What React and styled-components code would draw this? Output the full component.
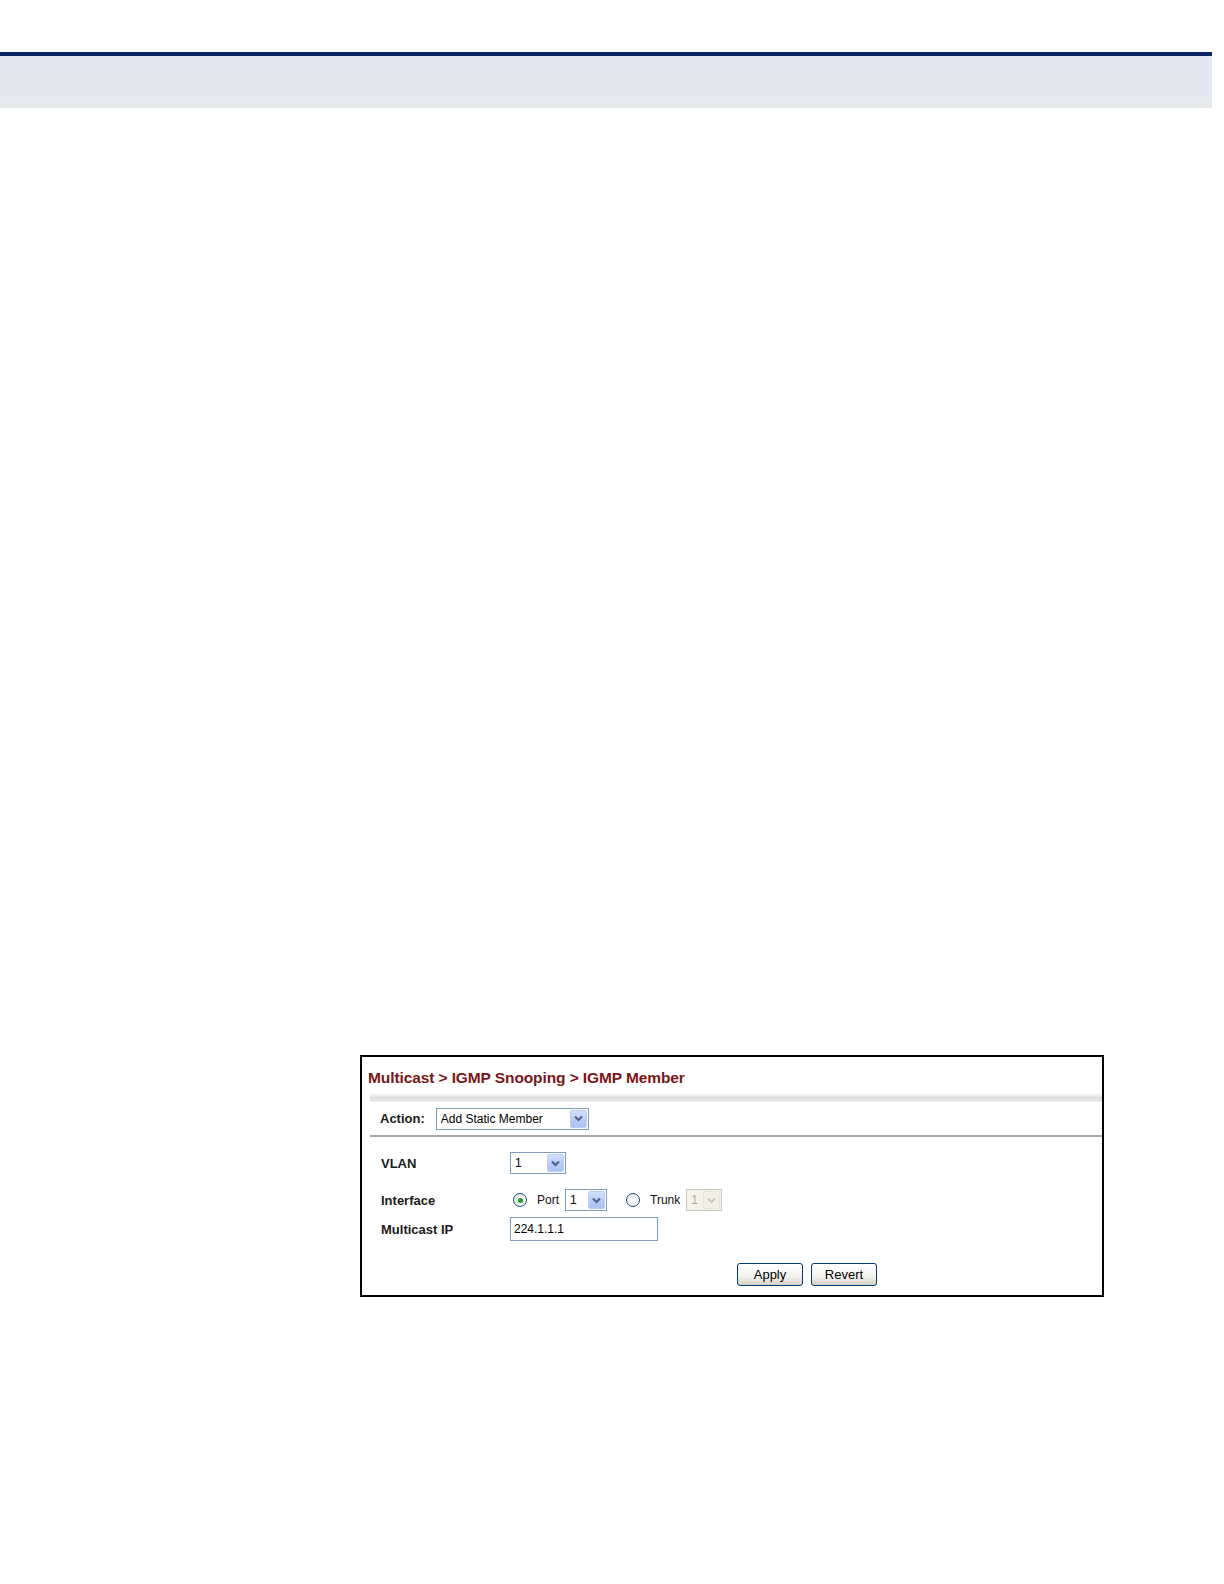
import React from "react";
import styled, { createGlobalStyle } from "styled-components";

const Global = createGlobalStyle`
  html, body {
    margin: 0;
    padding: 0;
    background: #ffffff;
  }
  body {
    font-family: "Liberation Sans", Arial, sans-serif;
  }
`;

const Page = styled.div`
  width: 1224px;
  height: 1584px;
  overflow: hidden;
  padding-top: 52px;
  box-sizing: border-box;
`;

const HeaderBand = styled.div`
  height: 52px;
  margin-right: 12px;
  border-top: 4px solid #0b2463;
  background: linear-gradient(to bottom, #e4e8f1, #e5e8ee 80%, #e6e9ea);
`;

const Body = styled.div`
  padding-top: 947px;
  padding-left: 360px;
`;

const Frame = styled.div`
  width: 744px;
  height: 242px;
  box-sizing: border-box;
  border: 2px solid #000;
  background: #fff;
  display: flex;
  flex-direction: column;
`;

const TitleBar = styled.div`
  height: 37px;
  display: flex;
  align-items: flex-end;
  padding: 0 0 7px 6px;
  box-sizing: border-box;
`;

const Title = styled.h1`
  margin: 0;
  font-size: 15.5px;
  font-weight: bold;
  color: #7b1616;
  letter-spacing: -0.1px;
`;

const Shade = styled.div`
  height: 8px;
  margin-left: 8px;
  background: linear-gradient(to bottom, #f6f6f6, #dcdcdc 50%, #eeeeee);
`;

const ActionRow = styled.div`
  height: 35px;
  margin-left: 8px;
  padding-left: 10px;
  border-bottom: 2px solid #a8a8a8;
  display: flex;
  align-items: center;
  gap: 11px;
  box-sizing: border-box;
`;

const Label = styled.span`
  font-size: 13px;
  font-weight: bold;
  color: #1a1a1a;
`;

const Form = styled.div`
  display: flex;
  flex-direction: column;
  padding: 15px 0 0 19px;
`;

const Row = styled.div`
  display: flex;
  align-items: center;
  height: ${(p) => p.h}px;
  margin-top: ${(p) => p.top || 0}px;
`;

const LabelCell = styled.div`
  width: 129px;
  flex: none;
`;

const SelectBox = styled.div`
  width: ${(p) => p.w}px;
  height: 22px;
  box-sizing: border-box;
  border: 1px solid ${(p) => (p.disabled ? "#cac8bb" : "#7f9db9")};
  background: ${(p) => (p.disabled ? "#f5f4ea" : "#fff")};
  display: flex;
  align-items: center;
  justify-content: space-between;
  padding: 1px;
  flex: none;
`;

const SelectText = styled.span`
  font-size: 12px;
  color: ${(p) => (p.disabled ? "#aca899" : "#000")};
  padding-left: 3px;
`;

const ArrowBtn = styled.span`
  width: 17px;
  height: 18px;
  box-sizing: border-box;
  border: 1px solid ${(p) => (p.disabled ? "#e8e6da" : "#bccdf3")};
  border-radius: 2px;
  background: ${(p) =>
    p.disabled
      ? "#f1f0e7"
      : "linear-gradient(to bottom, #d3e0fd, #b6c9f6 60%, #aec3f4)"};
  display: flex;
  align-items: center;
  justify-content: center;
`;

const TextInput = styled.div`
  width: 148px;
  height: 24px;
  box-sizing: border-box;
  border: 1px solid #7f9db9;
  font-size: 12px;
  padding-left: 3px;
  display: flex;
  align-items: center;
`;

const Radio = styled.span`
  width: 14px;
  height: 14px;
  box-sizing: border-box;
  border-radius: 50%;
  border: 1px solid #1d5281;
  background: radial-gradient(circle at 60% 60%, #ffffff, #dcdcd6);
  display: inline-flex;
  align-items: center;
  justify-content: center;
  margin-left: 3px;
  flex: none;
  &::after {
    content: "";
    width: 5px;
    height: 5px;
    border-radius: 50%;
    background: ${(p) => (p.checked ? "#21a121" : "transparent")};
  }
`;

const OptLabel = styled.span`
  font-size: 12px;
  color: #111;
  margin: 0 6px 0 10px;
`;

const Spacer = styled.span`
  width: ${(p) => p.w}px;
  flex: none;
`;

const ButtonRow = styled.div`
  display: flex;
  gap: 8px;
  padding-left: 375px;
  margin-top: 22px;
`;

const Button = styled.button`
  width: 66px;
  height: 23px;
  border: 1px solid #003c74;
  border-radius: 3px;
  background: linear-gradient(to bottom, #ffffff, #f3f3ee 60%, #d6d0c5);
  font-family: "Liberation Sans", Arial, sans-serif;
  font-size: 13px;
  color: #000;
  padding: 0;
`;

function Chevron({ disabled }) {
  return (
    <svg width="9" height="7" viewBox="0 0 9 7">
      <path
        d="M1 1.5 L4.5 5 L8 1.5"
        fill="none"
        stroke={disabled ? "#c9c7ba" : "#4d6185"}
        strokeWidth="2"
      />
    </svg>
  );
}

function Select({ value, w, disabled }) {
  return (
    <SelectBox w={w} disabled={disabled}>
      <SelectText disabled={disabled}>{value}</SelectText>
      <ArrowBtn disabled={disabled}>
        <Chevron disabled={disabled} />
      </ArrowBtn>
    </SelectBox>
  );
}

export default function App() {
  return (
    <Page>
      <Global />
      <HeaderBand />
      <Body>
        <Frame>
          <TitleBar>
            <Title>Multicast &gt; IGMP Snooping &gt; IGMP Member</Title>
          </TitleBar>
          <Shade />
          <ActionRow>
            <Label>Action:</Label>
            <Select value="Add Static Member" w={153} />
          </ActionRow>
          <Form>
            <Row h={22}>
              <LabelCell>
                <Label>VLAN</Label>
              </LabelCell>
              <Select value="1" w={56} />
            </Row>
            <Row h={22} top={15}>
              <LabelCell>
                <Label>Interface</Label>
              </LabelCell>
              <Radio checked />
              <OptLabel>Port</OptLabel>
              <Select value="1" w={42} />
              <Spacer w={16} />
              <Radio />
              <OptLabel>Trunk</OptLabel>
              <Select value="1" w={36} disabled />
            </Row>
            <Row h={24} top={6}>
              <LabelCell>
                <Label>Multicast IP</Label>
              </LabelCell>
              <TextInput>224.1.1.1</TextInput>
            </Row>
          </Form>
          <ButtonRow>
            <Button>Apply</Button>
            <Button>Revert</Button>
          </ButtonRow>
        </Frame>
      </Body>
    </Page>
  );
}
